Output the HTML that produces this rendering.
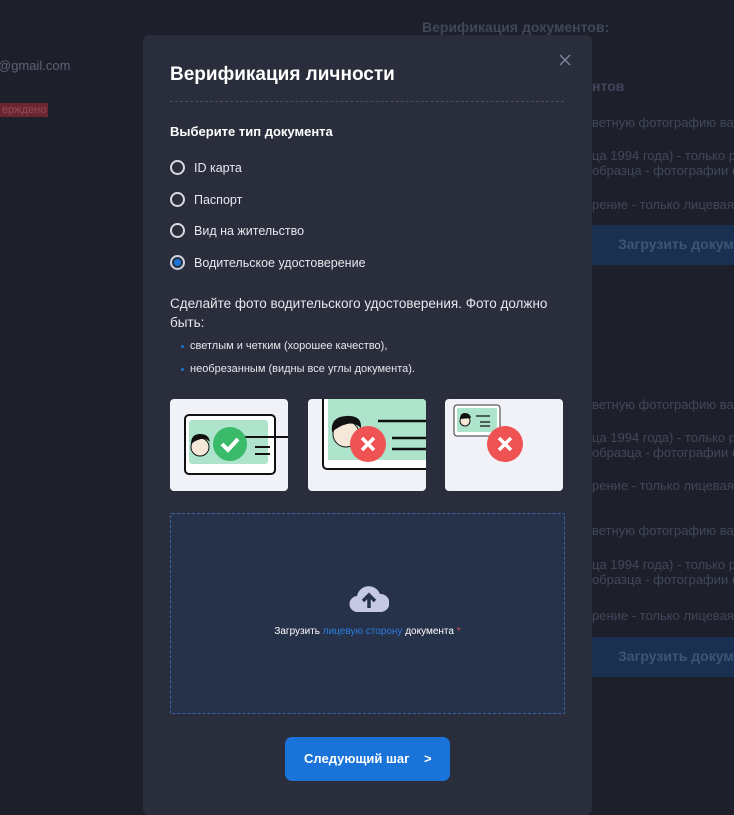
<!DOCTYPE html>
<html><head><meta charset="utf-8"><style>
*{box-sizing:border-box;margin:0;padding:0}
body{width:734px;height:800px;overflow:hidden;background:#1d1f2b;font-family:"Liberation Sans","DejaVu Sans",sans-serif;position:relative}
.bg{position:absolute;color:#41475a;font-size:13px;white-space:nowrap}
.modal{position:absolute;left:143px;top:35px;width:449px;height:780px;background:#2a2d3b;border-radius:6px}
.h{position:absolute;left:27px;top:29px;color:#fff;font-size:19px;font-weight:bold}
.sep{position:absolute;left:27px;top:66px;width:394px;border-top:1px dashed #4a4e5e}
.sub{position:absolute;left:27px;top:89px;color:#fff;font-size:13px;font-weight:bold}
.r{position:absolute;left:27px;color:#e6e8ee;font-size:12.5px}
.r i{display:inline-block;width:15px;height:15px;border:2px solid #d7d9e0;border-radius:50%;vertical-align:middle;margin-right:9px;position:relative;top:-1px}
.r i.on{border-color:#cfd3dc;background:#1a73d8;box-shadow:inset 0 0 0 2px #2a2d3b}
.p{position:absolute;left:27px;top:259px;width:400px;color:#e6e8ee;font-size:13.5px;line-height:19px}
.li{position:absolute;left:47px;color:#e6e8ee;font-size:11px}
.li:before{content:"";position:absolute;left:-9px;top:5px;width:3px;height:3px;border-radius:50%;background:#1a73d8}
.card{position:absolute;top:364px;width:118px;height:92px;background:#f1f2f7;border-radius:4px;overflow:hidden}
.up{position:absolute;left:27px;top:478px;width:395px;height:201px;border:1px dashed #3c64a0;background:#263249;border-radius:2px}
.ut{position:absolute;top:112px;width:100%;text-align:center;color:#fff;font-size:10px}
.btn{position:absolute;left:142px;top:702px;width:165px;height:44px;background:#1a73d8;border-radius:7px;color:#fff;font-size:13px;font-weight:bold;line-height:44px;padding-left:19px}
</style></head><body>
<div class="bg" style="left:-2px;top:58px;font-size:13px;color:#5d6274">@gmail.com</div>
<div class="bg" style="left:0;top:103px;background:#6a2630;color:#8f4a55;font-size:11px;padding:1px 2px">ерждено</div>
<div class="bg" style="left:422px;top:19px;font-size:14px;font-weight:bold">Верификация документов:</div>
<div class="bg" style="left:592px;top:78px;font-weight:bold;font-size:14px">нтов</div>
<div class="bg" style="left:592px;top:115px">ветную фотографию ва</div>
<div class="bg" style="left:592px;top:148px">ца 1994 года) - только р</div>
<div class="bg" style="left:592px;top:163px">образца - фотографии о</div>
<div class="bg" style="left:592px;top:197px">рение - только лицевая</div>
<div class="bg" style="left:592px;top:225px;width:142px;height:40px;background:#1a3050;color:#3c5677;font-weight:bold;font-size:14px;padding:11px 0 0 26px">Загрузить докум</div>
<div class="bg" style="left:592px;top:397px">ветную фотографию ва</div>
<div class="bg" style="left:592px;top:430px">ца 1994 года) - только р</div>
<div class="bg" style="left:592px;top:445px">образца - фотографии о</div>
<div class="bg" style="left:592px;top:478px">рение - только лицевая</div>
<div class="bg" style="left:592px;top:523px">ветную фотографию ва</div>
<div class="bg" style="left:592px;top:557px">ца 1994 года) - только р</div>
<div class="bg" style="left:592px;top:572px">образца - фотографии о</div>
<div class="bg" style="left:592px;top:608px">рение - только лицевая</div>
<div class="bg" style="left:592px;top:637px;width:142px;height:40px;background:#1a3050;color:#3c5677;font-weight:bold;font-size:14px;padding:11px 0 0 26px">Загрузить докум</div>

<div class="modal">
<div class="h">Верификация личности</div>
<svg style="position:absolute;left:416px;top:19px" width="12" height="12"><path d="M1 1l10 10M11 1L1 11" stroke="#80859a" stroke-width="1.4"/></svg>
<div class="sep"></div>
<div class="sub">Выберите тип документа</div>
<div class="r" style="top:126px"><i></i>ID карта</div>
<div class="r" style="top:158px"><i></i>Паспорт</div>
<div class="r" style="top:189px"><i></i>Вид на жительство</div>
<div class="r" style="top:221px"><i class="on"></i>Водительское удостоверение</div>
<div class="p">Сделайте фото водительского удостоверения. Фото должно быть:</div>
<div class="li" style="top:305px">светлым и четким (хорошее качество),</div>
<div class="li" style="top:328px">необрезанным (видны все углы документа).</div>

<div class="card" style="left:27px"><svg width="118" height="92">
<rect x="15" y="16" width="90" height="59" rx="4" fill="#fff" stroke="#111" stroke-width="2"/>
<rect x="19" y="21" width="79" height="44" rx="3" fill="#aee3cc"/>
<circle cx="30" cy="48" r="9" fill="#f5e8d9" stroke="#111"/><path d="M21 45q0-10 9-10t10 8q-4-4-9-3t-10 5z" fill="#111"/>
<path d="M75 38h45M85 48h15M85 55h15" stroke="#111" stroke-width="2" transform="translate(0,0)"/>
<circle cx="60" cy="45" r="17" fill="#33b864" opacity=".95"/><path d="M52 45l6 6 10-11" stroke="#fff" stroke-width="4" fill="none"/>
</svg></div>
<div class="card" style="left:165px"><svg width="118" height="92">
<rect x="15" y="-10" width="120" height="80" rx="4" fill="#fff" stroke="#111" stroke-width="2"/>
<rect x="20" y="-5" width="120" height="66" fill="#aee3cc"/>
<circle cx="38" cy="35" r="13" fill="#f5e8d9" stroke="#111"/><path d="M24 33q-2-15 14-16t15 12q-6-6-14-4t-15 8z" fill="#111"/>
<path d="M70 22h50M84 39h34M84 50h34" stroke="#111" stroke-width="2.5"/>
<circle cx="60" cy="45" r="18" fill="#ee5253"/><path d="M54 39l12 12M66 39l-12 12" stroke="#fff" stroke-width="3.5"/>
</svg></div>
<div class="card" style="left:302px"><svg width="118" height="92">
<rect x="9" y="6" width="46" height="31" rx="3" fill="#fff" stroke="#333"/>
<rect x="12" y="9" width="40" height="24" fill="#aee3cc"/>
<circle cx="20" cy="22" r="5" fill="#f5e8d9" stroke="#111"/><path d="M15 20q0-6 5-6t6 5z" fill="#111"/>
<path d="M31 17h14M35 23h10M35 27h10" stroke="#111" stroke-width="1.2"/>
<circle cx="60" cy="45" r="18" fill="#ee5253"/><path d="M54 39l12 12M66 39l-12 12" stroke="#fff" stroke-width="3.5"/>
</svg></div>

<div class="up">
<svg style="position:absolute;left:178px;top:70px" width="40" height="30" viewBox="0 0 40 30"><path d="M9 28a8 8 0 0 1-1-16 12 12 0 0 1 23-2 9 9 0 0 1 1 18z" fill="#c6c9e2"/><path d="M20 24V12M14 17l6-6 6 6" stroke="#263249" stroke-width="3.5" fill="none"/></svg>
<div class="ut">Загрузить <span style="color:#2b7ce0">лицевую сторону</span> документа <span style="color:#e04a5a">*</span></div>
</div>
<div class="btn">Следующий шаг<span style="position:absolute;left:139px">&gt;</span></div>
</div>
</body></html>
